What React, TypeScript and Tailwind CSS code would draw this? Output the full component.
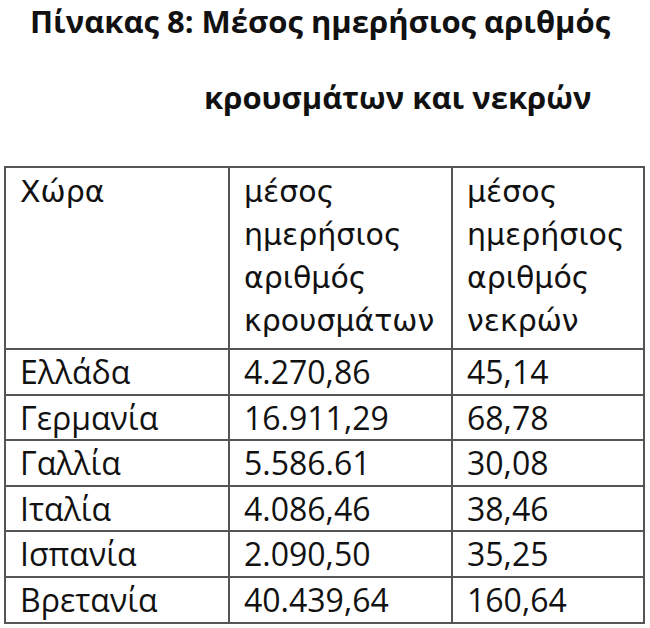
const rows: [string, string, string][] = [
  ["Ελλάδα", "4.270,86", "45,14"],
  ["Γερμανία", "16.911,29", "68,78"],
  ["Γαλλία", "5.586.61", "30,08"],
  ["Ιταλία", "4.086,46", "38,46"],
  ["Ισπανία", "2.090,50", "35,25"],
  ["Βρετανία", "40.439,64", "160,64"],
]

const cell = "border-2 border-[#555] px-[14px] align-top"

export default function App() {
  return (
    <div className="w-[650px] h-[628px] bg-white text-[#111] overflow-hidden">
      <h1 className="font-['Open_Sans',sans-serif] font-bold text-[31px] leading-none">
        <div className="pl-[30px] pt-[6px]">Πίνακας 8: Μέσος ημερήσιος αριθμός</div>
        <div className="pl-[204px] pt-[45px]">κρουσμάτων και νεκρών</div>
      </h1>

      <table className="mt-[53px] ml-[4px] w-[639px] table-fixed border-collapse">
        <colgroup>
          <col className="w-[224px]" />
          <col className="w-[223px]" />
          <col className="w-[192px]" />
        </colgroup>
        <thead>
          <tr className="h-[182px] font-['DejaVu_Sans',sans-serif] text-[30px] leading-[43px]">
            <th className={`${cell} font-normal text-left pt-[2px]`}>Χώρα</th>
            <th className={`${cell} font-normal text-left pt-[2px]`}>
              μέσος
              <br />
              ημερήσιος
              <br />
              αριθμός
              <br />
              κρουσμάτων
            </th>
            <th className={`${cell} font-normal text-left pt-[2px]`}>
              μέσος
              <br />
              ημερήσιος
              <br />
              αριθμός
              <br />
              νεκρών
            </th>
          </tr>
        </thead>
        <tbody className="font-['Open_Sans',sans-serif] text-[32px] leading-[42px]">
          {rows.map(([country, cases, deaths]) => (
            <tr key={country}>
              <td className={`${cell} h-[45.6px] pt-[1px]`}>{country}</td>
              <td className={`${cell} h-[45.6px] pt-[1px]`}>{cases}</td>
              <td className={`${cell} h-[45.6px] pt-[1px]`}>{deaths}</td>
            </tr>
          ))}
        </tbody>
      </table>
    </div>
  )
}
